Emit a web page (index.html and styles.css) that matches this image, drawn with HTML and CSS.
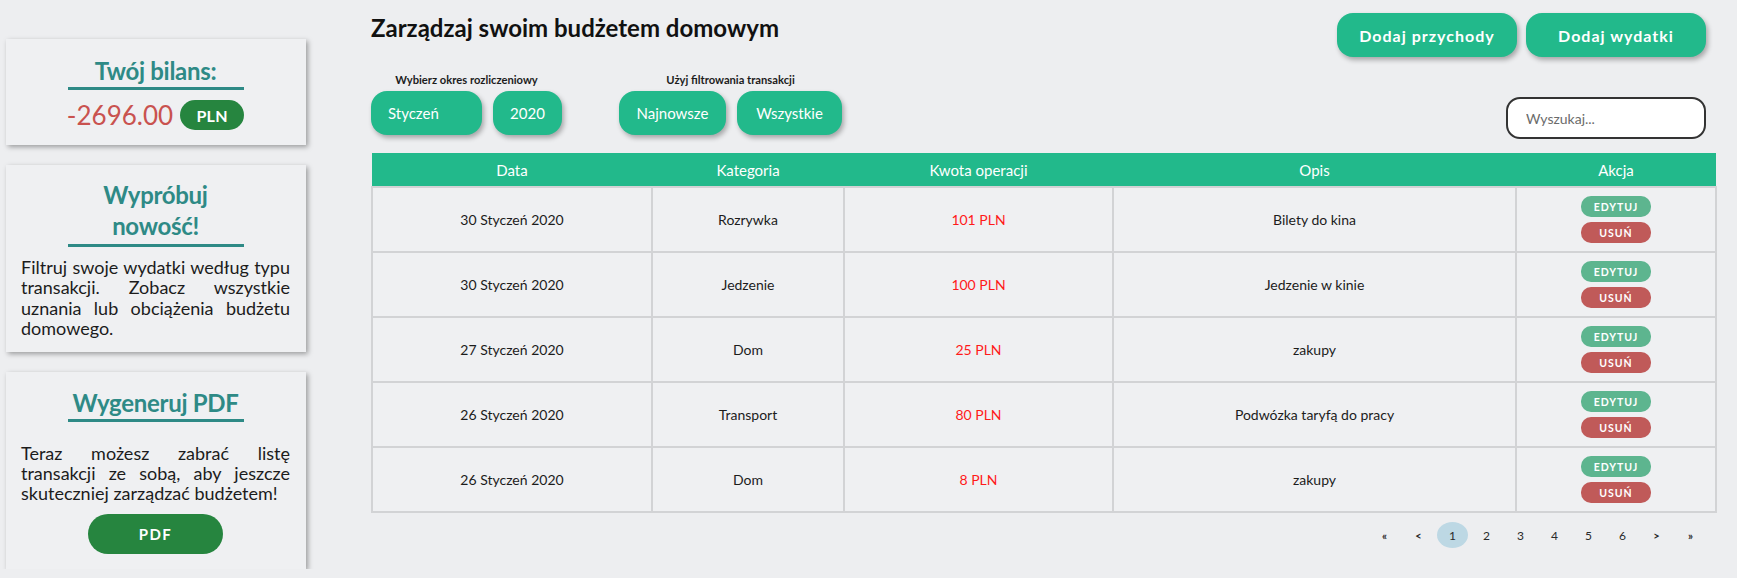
FILE: index.html
```html
<!DOCTYPE html>
<html lang="pl">
<head>
<meta charset="utf-8">
<title>Budżet domowy</title>
<link rel="stylesheet" href="styles.css">
</head>
<body>
<div class="page">
  <aside class="sidebar">
    <section class="card card-balance">
      <h2 class="card-title">Twój bilans:</h2>
      <div class="balance">
        <span class="balance-value">-2696.00</span>
        <span class="badge">PLN</span>
      </div>
    </section>
    <section class="card card-new">
      <h2 class="card-title">Wypróbuj nowość!</h2>
      <p class="card-text">Filtruj swoje wydatki według typu transakcji. Zobacz wszystkie uznania lub obciążenia budżetu domowego.</p>
    </section>
    <section class="card card-pdf">
      <h2 class="card-title">Wygeneruj PDF</h2>
      <p class="card-text card-text-pdf">Teraz możesz zabrać listę transakcji ze sobą, aby jeszcze skuteczniej zarządzać budżetem!</p>
      <button class="pdf-btn">PDF</button>
    </section>
  </aside>

  <main class="main">
    <div class="toolbar">
      <div class="toolbar-left">
        <h1 class="page-title">Zarządzaj swoim budżetem domowym</h1>
        <div class="filters">
          <div class="filter-group">
            <div class="filter-label">Wybierz okres rozliczeniowy</div>
            <div class="filter-buttons">
              <button class="pill pill-month">Styczeń</button>
              <button class="pill pill-year">2020</button>
            </div>
          </div>
          <div class="filter-group">
            <div class="filter-label">Użyj filtrowania transakcji</div>
            <div class="filter-buttons">
              <button class="pill pill-sort">Najnowsze</button>
              <button class="pill pill-type">Wszystkie</button>
            </div>
          </div>
        </div>
      </div>
      <div class="toolbar-right">
        <div class="actions-top">
          <button class="big-btn">Dodaj przychody</button>
          <button class="big-btn">Dodaj wydatki</button>
        </div>
        <input class="search" type="text" placeholder="Wyszukaj...">
      </div>
    </div>

    <table class="tx-table">
      <thead>
        <tr>
          <th class="col-date">Data</th>
          <th class="col-cat">Kategoria</th>
          <th class="col-amount">Kwota operacji</th>
          <th class="col-desc">Opis</th>
          <th class="col-act">Akcja</th>
        </tr>
      </thead>
      <tbody>
        <tr>
          <td>30 Styczeń 2020</td><td>Rozrywka</td><td class="amount">101 PLN</td><td>Bilety do kina</td>
          <td><div class="act"><button class="act-btn act-edit">EDYTUJ</button><button class="act-btn act-del">USUŃ</button></div></td>
        </tr>
        <tr>
          <td>30 Styczeń 2020</td><td>Jedzenie</td><td class="amount">100 PLN</td><td>Jedzenie w kinie</td>
          <td><div class="act"><button class="act-btn act-edit">EDYTUJ</button><button class="act-btn act-del">USUŃ</button></div></td>
        </tr>
        <tr>
          <td>27 Styczeń 2020</td><td>Dom</td><td class="amount">25 PLN</td><td>zakupy</td>
          <td><div class="act"><button class="act-btn act-edit">EDYTUJ</button><button class="act-btn act-del">USUŃ</button></div></td>
        </tr>
        <tr>
          <td>26 Styczeń 2020</td><td>Transport</td><td class="amount">80 PLN</td><td>Podwózka taryfą do pracy</td>
          <td><div class="act"><button class="act-btn act-edit">EDYTUJ</button><button class="act-btn act-del">USUŃ</button></div></td>
        </tr>
        <tr>
          <td>26 Styczeń 2020</td><td>Dom</td><td class="amount">8 PLN</td><td>zakupy</td>
          <td><div class="act"><button class="act-btn act-edit">EDYTUJ</button><button class="act-btn act-del">USUŃ</button></div></td>
        </tr>
      </tbody>
    </table>

    <nav class="pagination">
      <span class="pg pg-arrow">«</span>
      <span class="pg pg-arrow">&lt;</span>
      <span class="pg pg-active">1</span>
      <span class="pg">2</span>
      <span class="pg">3</span>
      <span class="pg">4</span>
      <span class="pg">5</span>
      <span class="pg">6</span>
      <span class="pg pg-arrow">&gt;</span>
      <span class="pg pg-arrow">»</span>
    </nav>
  </main>
</div>
</body>
</html>
```

FILE: styles.css
```css
* { box-sizing: border-box; }

html, body {
  margin: 0;
  padding: 0;
}

body {
  background: #edeef0;
  font-family: Lato, "Open Sans", "Liberation Sans", sans-serif;
  color: #1c1c1c;
}

button {
  font-family: inherit;
  border: none;
  cursor: pointer;
}

.page {
  display: flex;
  align-items: flex-start;
}

/* ---------- sidebar ---------- */
.sidebar {
  width: 300px;
  margin-left: 6px;
  padding-top: 39px;
  display: flex;
  flex-direction: column;
  gap: 20px;
  flex-shrink: 0;
}

.card {
  background: #eff0f2;
  box-shadow: 2px 2px 5px rgba(0, 0, 0, 0.35);
  padding: 16px 16px 15px 15px;
}

.card-new { padding-top: 14px; padding-bottom: 13px; }
.card-pdf { padding-top: 15px; padding-bottom: 15px; display: flex; flex-direction: column; align-items: center; }

.card-title {
  width: 176px;
  margin: 0 auto;
  padding-bottom: 1px;
  border-bottom: 3px solid #2e8a86;
  color: #2e8a86;
  font-size: 24px;
  font-weight: 700;
  letter-spacing: -0.3px;
  text-align: center;
  line-height: 31px;
}

.card-new .card-title { padding-bottom: 3px; }

.balance {
  margin-top: 10px;
  display: flex;
  align-items: center;
  justify-content: center;
  gap: 7px;
}

.balance-value {
  color: #c9524f;
  font-size: 26px;
  line-height: 30px;
}

.badge {
  background: #26853f;
  color: #fff;
  font-weight: 700;
  font-size: 16px;
  width: 64px;
  height: 30px;
  border-radius: 15px;
  display: flex;
  align-items: center;
  justify-content: center;
  letter-spacing: 0.3px;
}

.card-text {
  margin: 10px 0 0;
  font-size: 18px;
  line-height: 20.4px;
  text-align: justify;
  color: #1c1c1c;
}

.card-text-pdf {
  margin-top: 21px;
  width: 100%;
}

.pdf-btn {
  margin-top: 10px;
  width: 135px;
  height: 40px;
  border-radius: 20px;
  background: #26853f;
  color: #fff;
  font-weight: 700;
  font-size: 15px;
  letter-spacing: 1.5px;
}

/* ---------- main ---------- */
.main {
  margin-left: 65px;
  width: 1344px;
  padding-top: 13px;
}

.toolbar {
  display: flex;
  justify-content: space-between;
  align-items: flex-start;
}

.page-title {
  margin: 0;
  font-size: 24px;
  line-height: 30px;
  font-weight: 700;
  color: #111;
}

.filters {
  margin-top: 30px;
  display: flex;
  gap: 57px;
}

.filter-group {
  display: flex;
  flex-direction: column;
  align-items: center;
}

.filter-label {
  font-size: 11.2px;
  font-weight: 700;
  line-height: 13px;
  color: #1c1c1c;
}

.filter-buttons {
  margin-top: 5px;
  display: flex;
  gap: 11px;
}

.pill {
  height: 44px;
  border-radius: 16px;
  background: #22b98b;
  color: #fff;
  font-size: 15px;
  box-shadow: 2px 3px 5px rgba(0, 0, 0, 0.3);
}

.pill-month { width: 111px; text-align: left; padding-left: 17px; }
.pill-year { width: 69px; }
.pill-sort { width: 107px; }
.pill-type { width: 105px; }

.toolbar-right {
  display: flex;
  flex-direction: column;
  align-items: flex-end;
  padding-right: 9px;
}

.actions-top {
  display: flex;
  gap: 9px;
}

.big-btn {
  width: 180px;
  height: 44px;
  border-radius: 16px;
  background: #22b98b;
  color: #fff;
  font-size: 16px;
  font-weight: 700;
  letter-spacing: 1px;
  box-shadow: 2px 3px 5px rgba(0, 0, 0, 0.3);
}

.search {
  margin-top: 40px;
  width: 200px;
  height: 42px;
  border: 2px solid #333;
  border-radius: 14px;
  background: #fff;
  padding: 0 0 0 18px;
  font-family: inherit;
  font-size: 14px;
  color: #333;
  outline: none;
}

.search::placeholder { color: #6b6b6b; }

/* ---------- table ---------- */
.tx-table {
  margin-top: 14px;
  width: 1344px;
  border-collapse: collapse;
  table-layout: fixed;
  font-size: 14px;
}

.tx-table th {
  background: #22b98b;
  color: #fff;
  font-weight: 400;
  font-size: 15px;
  height: 34px;
  padding: 0;
  text-align: center;
}

.col-date { width: 280px; }
.col-cat { width: 192px; }
.col-amount { width: 269px; }
.col-desc { width: 403px; }
.col-act { width: 200px; }

.tx-table td {
  height: 65px;
  padding: 0;
  text-align: center;
  vertical-align: middle;
  border: 2px solid #d2d3d5;
  background: #eff0f2;
  color: #1c1c1c;
}

.tx-table td.amount { color: #ff1a1a; }

.act {
  display: flex;
  flex-direction: column;
  align-items: center;
  gap: 5px;
}

.act-btn {
  width: 70px;
  height: 21px;
  border-radius: 10px;
  color: #fff;
  font-size: 10.5px;
  font-weight: 700;
  letter-spacing: 1px;
  padding: 0;
}

.act-edit { background: #5db58f; }
.act-del { background: #c05a59; }

/* ---------- pagination ---------- */
.pagination {
  margin-top: 9px;
  display: flex;
  justify-content: flex-end;
  gap: 3px;
  padding-right: 9px;
}

.pg {
  width: 31px;
  height: 26px;
  display: flex;
  align-items: center;
  justify-content: center;
  font-size: 12px;
  color: #2a2a2a;
}

.pg-arrow { font-size: 11px; font-weight: 700; }

.pg-active {
  background: #bdd8e4;
  border-radius: 50%;
}
```
